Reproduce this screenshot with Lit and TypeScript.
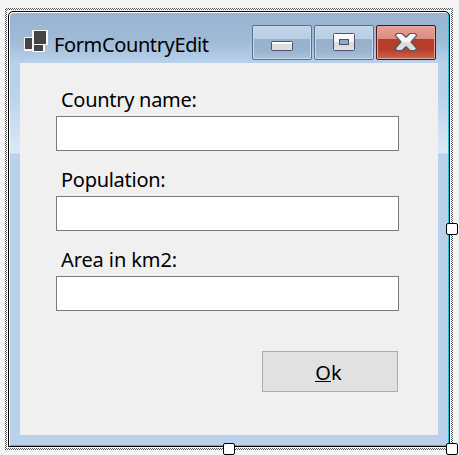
import { LitElement, html, css, svg } from "lit";
import { customElement, property } from "lit/decorators.js";

@customElement("caption-button")
class CaptionButton extends LitElement {
  @property() kind = "min";

  static styles = css`
    :host { display: block; width: 60px; height: 35px; }
    .face {
      box-sizing: border-box; width: 60px; height: 35px; border: 1px solid #5b6f8f; border-radius: 2px;
      box-shadow: inset 0 0 0 1px #c9daeb;
      background: linear-gradient(#c2d5e8 0, #bacee4 13px, #98b0cc 13px, #9ab3cf 25px, #abc3dd 33px);
    }
    .close {
      border-color: #4a1420; box-shadow: inset 0 0 0 1px #e7a799;
      background: linear-gradient(#e6a295 0, #dc8c7d 13px, #b53d28 13px, #b8402b 24px, #cc6650 33px);
    }
    svg { display: block; width: 58px; height: 33px; }
  `;

  glyph() {
    if (this.kind === "min")
      return svg`<rect x="18.5" y="15.5" width="21" height="9" rx="1" fill="#dedede" stroke="#4e5268"/>
        <rect x="19" y="16" width="20" height="2" fill="#fff"/>`;
    if (this.kind === "max")
      return svg`<rect x="18.5" y="7.5" width="21" height="17" rx="1" fill="url(#g)" stroke="#4e5268"/>
        <rect x="24.5" y="13.5" width="9" height="5" fill="#8ba8c7" stroke="#4e5268"/>`;
    return svg`<path d="M20 7.5H25L29 11.3L33 7.5H38L39.8 9.3L34 15.8L39.8 22.5L38 24.5H33L29 20.7L25 24.5H20L18.2 22.5L24 15.8L18.2 9.3Z"
      fill="url(#g)" stroke="#535666" stroke-width="1.2" stroke-linejoin="round"/>`;
  }

  render() {
    return html`<div class="face ${this.kind}">
      <svg viewBox="0 0 58 33">
        <defs><linearGradient id="g" x1="0" y1="0" x2="0" y2="1">
          <stop offset="0" stop-color="#fff"/><stop offset=".5" stop-color="#f2f2f2"/>
          <stop offset=".55" stop-color="#d8d8d8"/><stop offset="1" stop-color="#e4e4e4"/>
        </linearGradient></defs>
        ${this.glyph()}
      </svg>
    </div>`;
  }
}

@customElement("app-root")
class AppRoot extends LitElement {
  static styles = css`
    :host {
      display: block; box-sizing: border-box; width: 459px; height: 455px; padding: 8px 0 0 5px;
      background: #f5f5f5; color: #000; overflow: hidden;
      font: 20px/27px "Noto Sans", "Open Sans", sans-serif;
    }
    .selection {
      position: relative; box-sizing: border-box; width: 448px; height: 442px; padding: 3px;
      background:
        linear-gradient(#f8f8f8, #f8f8f8) 2px 2px / 444px 438px no-repeat,
        repeating-conic-gradient(#555 0 25%, #fff 0 50%) 0 0 / 2px 2px;
    }
    .window {
      box-sizing: border-box; width: 442px; height: 436px; border: 1px solid #000;
      border-radius: 5px 5px 0 0; padding: 0 10px 10px 11px;
      box-shadow: inset 1px 1px #fff, inset -1px -1px #25c5e4;
      background: linear-gradient(#99b4d1 0, #9fbad7 28px, #b9d1ea 51px, #b9d1ea 80px, #dce8f5 138px, #dce8f5 141px, #b9d1ea 142px);
      display: flex; flex-direction: column;
    }
    .titlebar { display: flex; height: 51px; flex: none; }
    .icon { width: 24px; height: 24px; margin: 17px 0 0 4px; flex: none; }
    .title { margin: 19px 0 0 6px; flex: 1; white-space: nowrap; letter-spacing: -.38px; }
    .controls { display: flex; gap: 2px; padding: 13px 3px 0 0; }
    .client {
      box-sizing: border-box; width: 418px; height: 372px; background: #f0f0f0;
      padding: 23px 39px 0 36px; display: flex; flex-direction: column;
    }
    .field { display: block; height: 80px; letter-spacing: -.28px; }
    .field:nth-child(3) { letter-spacing: -.1px; }
    .label { display: block; height: 30px; padding-left: 5px; white-space: nowrap; }
    input {
      display: block; box-sizing: border-box; width: 343px; height: 35px; margin: 0;
      border: 1px solid #7a7a7a; border-radius: 0; background: #fff; font: inherit; outline: none;
    }
    .ok {
      align-self: flex-end; width: 136px; height: 41px; margin: 25px 1px 0 0; padding: 2px 3px 0 0;
      border: 1px solid #adadad; border-radius: 0; background: #e1e1e1; color: #000; font: inherit;
    }
    .key { border-bottom: 1px solid #000; display: inline-block; height: 22px; }
    .handle {
      position: absolute; box-sizing: border-box; width: 12px; height: 12px;
      border: 1px solid #000; border-radius: 2px; background: #fff;
    }
    .east { left: 441px; top: 215px; }
    .south { left: 218px; top: 435px; }
    .corner { left: 441px; top: 435px; }
  `;

  render() {
    return html`<div class="selection">
      <div class="window">
        <div class="titlebar">
          <svg class="icon" viewBox="0 0 24 24" shape-rendering="crispEdges">
            <path fill="#f5f5f5" d="M0 8H8V1H24V16H21V23H8V22H0Z"/>
            <path fill="#444" d="M1 9H8V20H1ZM10 2H22V15H10ZM10 16H19V22H10Z"/>
          </svg>
          <div class="title">FormCountryEdit</div>
          <div class="controls">
            ${["min", "max", "close"].map((k) => html`<caption-button kind=${k}></caption-button>`)}
          </div>
        </div>
        <div class="client">
          ${["Country name:", "Population:", "Area in km2:"].map(
            (t) => html`<label class="field"><span class="label">${t}</span><input type="text" /></label>`
          )}
          <button class="ok"><span class="key">O</span>k</button>
        </div>
      </div>
      <div class="handle east"></div>
      <div class="handle south"></div>
      <div class="handle corner"></div>
    </div>`;
  }
}
